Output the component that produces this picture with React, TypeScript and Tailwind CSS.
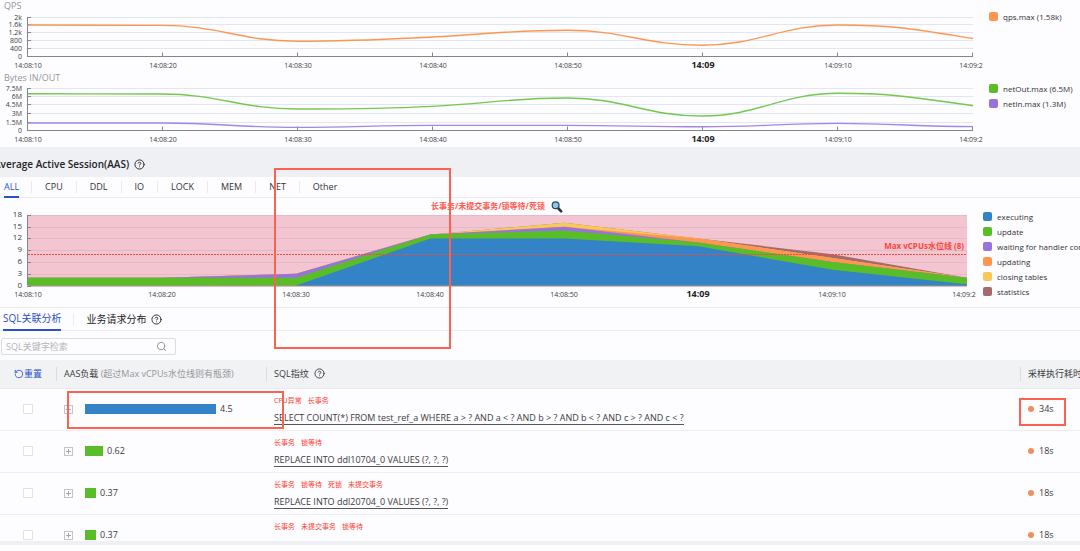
import { CircleHelp, Plus, RotateCcw, Search } from 'lucide-react';

type Point = [x: number, y: number, slope?: number];

interface LineChartProps {
  title: string;
  ticks: string[];
  gridLines: number[];
  lines: { color: string; points: Point[] }[];
}

interface LegendItem {
  label: string;
  color: string;
}

interface SqlRow {
  id: number;
  load: string;
  barWidth: number;
  color: string;
  tags: string[];
  sql?: string;
  time: string;
}

const TIMES = ['14:08:10', '14:08:20', '14:08:30', '14:08:40', '14:08:50', '14:09', '14:09:10', '14:09:2'];

const AAS_TABS = ['ALL', 'CPU', 'DDL', 'IO', 'LOCK', 'MEM', 'NET', 'Other'];

const AAS_LEGEND: LegendItem[] = [
  { label: 'executing', color: 'bg-[#3483c6]' },
  { label: 'update', color: 'bg-[#59bd27]' },
  { label: 'waiting for handler commit', color: 'bg-[#9873dd]' },
  { label: 'updating', color: 'bg-[#ff9650]' },
  { label: 'closing tables', color: 'bg-[#fac858]' },
  { label: 'statistics', color: 'bg-[#a46a6c]' },
];

// Cumulative tops of the stacked series, drawn from the back to the front
const AAS_LAYERS = [
  { color: '#a46a6c', values: [2, 2, 3, 13, 16, 12, 8, 2] },
  { color: '#fac858', values: [2, 2, 3, 13, 16, 12, 7, 2] },
  { color: '#ff9650', values: [2, 2, 3, 13, 15, 12, 7, 2] },
  { color: '#9873dd', values: [2, 2, 3, 13, 15, 11, 6, 2] },
  { color: '#59bd27', values: [2, 2, 2, 13, 14, 11, 6, 2] },
  { color: '#3483c6', values: [0, 0, 0, 12, 12, 10, 4, 0.3] },
];

const ROWS: SqlRow[] = [
  {
    id: 1,
    load: '4.5',
    barWidth: 131,
    color: 'bg-[#3483c6]',
    tags: ['CPU异常', '长事务'],
    sql: 'SELECT COUNT(*) FROM test_ref_a WHERE a > ? AND a < ? AND b > ? AND b < ? AND c > ? AND c < ?',
    time: '34s',
  },
  {
    id: 2,
    load: '0.62',
    barWidth: 18,
    color: 'bg-[#59bd27]',
    tags: ['长事务', '锁等待'],
    sql: 'REPLACE INTO ddl10704_0 VALUES (?, ?, ?)',
    time: '18s',
  },
  {
    id: 3,
    load: '0.37',
    barWidth: 11,
    color: 'bg-[#59bd27]',
    tags: ['长事务', '锁等待', '死锁', '未提交事务'],
    sql: 'REPLACE INTO ddl20704_0 VALUES (?, ?, ?)',
    time: '18s',
  },
  {
    id: 4,
    load: '0.37',
    barWidth: 11,
    color: 'bg-[#59bd27]',
    tags: ['长事务', '未提交事务', '锁等待'],
    time: '18s',
  },
];

const smoothPath = (points: Point[]) =>
  points
    .map(([x, y, slope = 0], i) => {
      if (i === 0) return `M${x} ${y}`;
      const [px, py, pSlope = 0] = points[i - 1];
      const h = (x - px) * 0.42;
      return `C${px + h} ${py + pSlope * h} ${x - h} ${y - slope * h} ${x} ${y}`;
    })
    .join(' ');

const TimeAxis = ({ y, step, end }: { y: number; step: number; end: number }) => (
  <g>
    <path d={`M28 ${y}H${end}`} stroke="#85868d" />
    {TIMES.map((time, i) => (
      <g key={time}>
        <path d={`M${Math.round(28 + i * step) - 0.5} ${y - 4}V${y}`} stroke="#85868d" />
        <text
          x={28 + i * step - (i === 7 ? 2 : 0)}
          y={y + 11}
          textAnchor="middle"
          className={time === '14:09' ? 'fill-[#222222] text-[9px] font-bold' : 'fill-[#3c3c42] text-[7px]'}
        >
          {time}
        </text>
      </g>
    ))}
  </g>
);

const LineChart = ({ title, ticks, gridLines, lines }: LineChartProps) => {
  const bottom = gridLines[gridLines.length - 1];
  return (
    <div className="min-w-0 flex-1">
      <h3 className="h-3 pl-1 text-[9px] leading-[11px] text-[#96969c]">{title}</h3>
      <svg viewBox="0 0 984 60" className="block w-full overflow-visible" role="img" aria-label={title}>
        {gridLines.slice(0, -1).map((y) => (
          <path key={y} d={`M28 ${y}H973`} stroke="#e2e6f2" />
        ))}
        {gridLines.map((y, i) => (
          <g key={y}>
            <path d={`M27 ${y}h4`} stroke="#85868d" />
            <text x="22" y={y + 2} textAnchor="end" className="fill-[#3c3c42] text-[7px]">
              {ticks[i]}
            </text>
          </g>
        ))}
        <path d={`M27.5 ${gridLines[0]}V${bottom}`} stroke="#85868d" />
        <TimeAxis y={bottom} step={135} end={973} />
        {lines.map((line) => (
          <path key={line.color} d={smoothPath(line.points)} fill="none" stroke={line.color} strokeWidth="1.4" />
        ))}
      </svg>
    </div>
  );
};

const Legend = ({ items }: { items: LegendItem[] }) => (
  <ul>
    {items.map((item) => (
      <li key={item.label} className="flex h-[15px] items-center gap-[5px] text-[8px] whitespace-nowrap text-[#333338]">
        <span className={`h-[9px] w-[9px] shrink-0 rounded-[2px] ${item.color}`} />
        {item.label}
      </li>
    ))}
  </ul>
);

const AasChart = () => {
  const y = (value: number) => 80.5 - value * 3.92;
  const x = (i: number) => 28 + i * 134.1;
  return (
    <svg viewBox="0 -7 979 109" className="block min-w-0 flex-1" role="img" aria-label="AAS">
      <text x="431" y="4" className="fill-[#ff5a50] text-[8px] font-bold">
        长事务/未提交事务/锁等待/死锁
      </text>
      <path d="M558 3l3.2 3.4" stroke="#2a3338" strokeWidth="2.6" strokeLinecap="round" />
      <circle cx="555.6" cy="0.2" r="3.4" fill="#8cc8ee" stroke="#2c4456" strokeWidth="1.2" />
      <rect x="28" y="10" width="939" height="70" fill="#f2c5d0" />
      {[18, 15, 12, 9, 6, 3, 0].map((value) => (
        <g key={value}>
          <path d={`M28 ${Math.round(y(value))}.5H967`} stroke="#e5b9c5" />
          <path d={`M27 ${Math.round(y(value))}.5h4`} stroke="#85868d" />
          <text x="22" y={y(value) + 2} textAnchor="end" className="fill-[#3c3c42] text-[8px]">
            {value}
          </text>
        </g>
      ))}
      <path d="M27.5 10V80" stroke="#85868d" />
      <TimeAxis y={80.5} step={134} end={967} />
      {AAS_LAYERS.map((layer) => (
        <polygon
          key={layer.color}
          fill={layer.color}
          points={`28,80.5 ${layer.values.map((value, i) => `${x(i)},${y(value)}`).join(' ')} 967,80.5`}
        />
      ))}
      <path d="M28 49.5H967" stroke="#f5483b" strokeDasharray="2 1" />
      <text x="964" y="44" textAnchor="end" className="fill-[#f8483c] text-[8px] font-bold">
        Max vCPUs水位线 (8)
      </text>
    </svg>
  );
};

const SqlTable = () => (
  <div className="h-[181px] overflow-hidden">
    <table className="w-full table-fixed border-collapse text-left text-[9px] text-[#3b3b40]">
      <thead>
        <tr className="h-7 border-b border-[#e8e9ec] bg-[#f1f2f4]">
          <th className="w-14 p-0 pl-[14px] font-normal">
            <button type="button" className="flex items-center text-[#2a50cc]">
              <RotateCcw size={10} strokeWidth={2} />
              重置
            </button>
          </th>
          <th className="w-[210px] p-0 font-normal">
            <div className="h-[14px] border-l border-[#dcdde1] pl-[7px] leading-[14px]">
              AAS负载 <span className="text-[#96969c]">(超过Max vCPUs水位线则有瓶颈)</span>
            </div>
          </th>
          <th className="p-0 font-normal">
            <div className="flex h-[14px] items-center gap-[5px] border-l border-[#dcdde1] pl-[7px]">
              SQL指纹
              <CircleHelp size={11} />
            </div>
          </th>
          <th className="w-[60px] p-0 font-normal">
            <div className="h-[14px] overflow-hidden border-l border-[#dcdde1] pl-[7px] leading-[14px] whitespace-nowrap">
              采样执行耗时
            </div>
          </th>
        </tr>
      </thead>
      <tbody>
        {ROWS.map((row, i) => (
          <tr key={row.id} className="h-[42px] border-b border-[#eeeef1]">
            <td className="p-0 pl-[23px]">
              <input
                type="checkbox"
                aria-label={row.tags.join(' ')}
                className="block h-[10px] w-[10px] appearance-none rounded-[1px] border border-[#dfe1e8] bg-white"
              />
            </td>
            <td className="relative p-0 pl-2">
              <div className="flex items-center">
                <button
                  type="button"
                  aria-label="+"
                  className="mr-3 flex h-[9px] w-[9px] items-center justify-center border border-[#c4c4c9] text-[#9b9ba0]"
                >
                  <Plus size={7} strokeWidth={3} />
                </button>
                <span className={`h-[10px] ${row.color}`} style={{ width: row.barWidth }} />
                <span className="ml-1">{row.load}</span>
              </div>
              {i === 0 && (
                <div className="pointer-events-none absolute top-[2px] left-[11px] h-[38px] w-[217px] border-2 border-[#fb6350]" />
              )}
            </td>
            <td className="p-0 pt-[2px] pl-2">
              <div className="flex gap-[6px] text-[7px] leading-[12px] text-[#fb4030]">
                {row.tags.map((tag) => (
                  <span key={tag}>{tag}</span>
                ))}
              </div>
              <div className="mt-[5px] flex h-[13px]">
                {row.sql && (
                  <a href="#sql" className="border-b border-[#55555a] leading-[12px] whitespace-nowrap">
                    {row.sql}
                  </a>
                )}
              </div>
            </td>
            <td className="relative p-0 pl-2">
              <div className="flex items-center gap-[5px]">
                <span className="h-[6px] w-[6px] rounded-full bg-[#f58e5e]" />
                {row.time}
              </div>
              {i === 0 && (
                <div className="pointer-events-none absolute top-[9px] -left-px h-7 w-[47px] border-2 border-[#fb6350]" />
              )}
            </td>
          </tr>
        ))}
      </tbody>
    </table>
  </div>
);

export default function App() {
  return (
    <main className="min-h-screen overflow-hidden bg-[#fdfcfe] font-['Open_Sans','Noto_Sans_CJK_SC',sans-serif] text-[#333338]">
      <section className="flex">
        <LineChart
          title="QPS"
          ticks={['2k', '1.6k', '1.2k', '800', '400', '0']}
          gridLines={[5.5, 12.5, 20.5, 28.5, 36.5, 44.5]}
          lines={[
            {
              color: '#ff9650',
              points: [[28, 13], [162, 13.4], [297, 29.2], [432, 25, -0.05], [567, 18.3], [702, 33.2], [838, 13], [973, 26.5, 0.16]],
            },
          ]}
        />
        <div className="w-[96px] shrink-0 pt-[9px] pl-[5px]">
          <Legend items={[{ label: 'qps.max (1.58k)', color: 'bg-[#ff9650]' }]} />
        </div>
      </section>
      <section className="flex border-b border-[#eff0f3] pb-[3px]">
        <LineChart
          title="Bytes IN/OUT"
          ticks={['7.5M', '6M', '4.5M', '3M', '1.5M', '0']}
          gridLines={[4.5, 12.5, 20.5, 29.5, 38.5, 46.5]}
          lines={[
            {
              color: '#72c94c',
              points: [[28, 9.8], [162, 10], [297, 25], [432, 22.4, -0.05], [567, 14], [702, 32], [838, 9.3], [973, 21.7, 0.14]],
            },
            {
              color: '#a487e4',
              points: [[28, 39], [162, 39], [297, 43.4], [432, 41.4], [567, 41.4], [702, 42.8], [838, 39.4], [973, 42.6]],
            },
          ]}
        />
        <div className="w-[96px] shrink-0 pt-[9px] pl-[5px]">
          <Legend
            items={[
              { label: 'netOut.max (6.5M)', color: 'bg-[#59bd27]' },
              { label: 'netIn.max (1.3M)', color: 'bg-[#9873dd]' },
            ]}
          />
        </div>
      </section>

      <section className="relative">
        <div className="flex h-[29px] items-center gap-[5px] overflow-hidden bg-[#eff0f3] pt-1 text-[#222227]">
          <h2 className="-ml-[6px] text-[10px] font-semibold">Average Active Session(AAS)</h2>
          <CircleHelp size={11} />
        </div>
        <nav className="flex h-[21px] items-center border-b border-[#ebebee] text-[9px]">
          {AAS_TABS.map((tab, i) => (
            <div key={tab} className={i === 0 ? 'pr-3 pl-1' : 'border-l border-[#ebebee] px-[13px]'}>
              <button
                type="button"
                className={
                  i === 0 ? 'block h-[21px] border-b-2 border-[#2a50cc] pt-[2px] text-[#2a50cc]' : 'block h-3 leading-3'
                }
              >
                {tab}
              </button>
            </div>
          ))}
        </nav>
        <div className="flex">
          <AasChart />
          <div className="w-[101px] shrink-0 overflow-hidden pt-[11px] pl-1">
            <Legend items={AAS_LEGEND} />
          </div>
        </div>
        <div className="pointer-events-none absolute top-5 left-[274px] h-[181px] w-[177px] border-2 border-[#fb6350]" />
      </section>

      <section>
        <nav className="flex h-6 items-center border-y border-[#ebebee] pl-[3px] text-[10px]">
          <button type="button" className="h-6 border-b-2 border-[#2a50cc] text-[#2a50cc]">
            SQL关联分析
          </button>
          <button type="button" className="ml-3 flex h-3 items-center gap-[5px] border-l border-[#ebebee] pl-3 text-[#222227]">
            业务请求分布
            <CircleHelp size={11} />
          </button>
        </nav>
        <div className="pt-[7px] pb-[5px] pl-px">
          <label className="flex h-[17px] w-[175px] items-center rounded-[2px] border border-[#dcdde1] pr-2 pl-1 text-[#8b8b90]">
            <input
              type="text"
              aria-label="SQL关键字检索"
              placeholder="SQL关键字检索"
              className="min-w-0 flex-1 bg-transparent text-[9px] outline-none placeholder:text-[#b5b5ba]"
            />
            <Search size={11} />
          </label>
        </div>
        <SqlTable />
        <div className="h-1 bg-[#eff0f3]" />
      </section>
    </main>
  );
}
